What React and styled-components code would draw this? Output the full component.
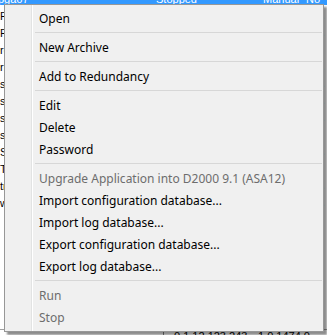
import React from "react";
import styled, { createGlobalStyle } from "styled-components";

const Global = createGlobalStyle`
  html, body { margin: 0; padding: 0; background: #ffffff; }
  body { width: 327px; height: 335px; overflow: hidden; }
`;

const Page = styled.div`
  position: relative;
  width: 327px;
  height: 335px;
  overflow: hidden;
  background: #ffffff;
  font-family: "Liberation Sans", Arial, sans-serif;
`;

const List = styled.div`
  display: flex;
  flex-direction: column;
  margin-top: -12px;
`;

const Row = styled.div`
  display: grid;
  grid-template-columns: 156px 107px 43px 1fr;
  height: 17px;
  line-height: 17px;
  font-size: 11px;
  white-space: nowrap;
  overflow: hidden;
  background: ${(p) => (p.$selected ? "#3399ff" : "#ffffff")};
  color: ${(p) => (p.$selected ? "#ffffff" : "#000000")};
  padding-top: 3px;
  box-sizing: border-box;
`;

const Cell = styled.span`
  overflow: hidden;
  margin-left: ${(p) => p.$shift || 0}px;
`;

const Footer = styled.div`
  position: absolute;
  left: 0;
  right: 0;
  top: 329px;
  height: 6px;
  border-top: 1px solid #a0a0a0;
  background: #ffffff;
  display: flex;
  font-size: 11px;
  line-height: 12px;
  color: #000;
  white-space: nowrap;
`;

const FootCell = styled.span`
  width: ${(p) => p.$w}px;
  padding-left: ${(p) => p.$pad || 0}px;
  border-left: ${(p) => (p.$line ? "1px solid #808080" : "none")};
  box-sizing: border-box;
  overflow: hidden;
`;

const Menu = styled.div`
  position: absolute;
  left: 4px;
  top: 4px;
  width: 320px;
  box-sizing: border-box;
  border: 1px solid #979797;
  padding: 2px 1px 3px 2px;
  background:
    linear-gradient(
      to right,
      transparent 26px,
      #e2e3e3 26px,
      #e2e3e3 27px,
      #ffffff 27px,
      #ffffff 28px,
      transparent 28px
    ),
    #f0f0f0;
  box-shadow: 3px 3px 2px rgba(0, 0, 0, 0.45);
  font-family: "Noto Sans", "Open Sans", sans-serif;
  font-size: 12px;
  display: flex;
  flex-direction: column;
`;

const Item = styled.div`
  height: 22px;
  line-height: 22px;
  padding-top: 1px;
  box-sizing: border-box;
  padding-left: 32px;
  color: ${(p) => (p.$disabled ? "#6d6d6d" : "#000000")};
  white-space: nowrap;
`;

const Separator = styled.div`
  height: 7px;
  display: flex;
  align-items: center;
  padding-left: 28px;
  &::after {
    content: "";
    flex: 1;
    height: 1px;
    background: #d7d7d7;
  }
`;

const rows = [
  { name: "pga67", status: "Stopped", mode: "Manual", flag: "No", sel: true },
  { name: "Pr_db01", status: "Running", mode: "Auto", flag: "Yes" },
  { name: "Redun_a", status: "Running", mode: "Auto", flag: "Yes" },
  { name: "rc_arch", status: "Stopped", mode: "Manual", flag: "No" },
  { name: "rr_cfg", status: "Running", mode: "Auto", flag: "Yes" },
  { name: "srv_01", status: "Running", mode: "Auto", flag: "Yes" },
  { name: "srv_02", status: "Running", mode: "Auto", flag: "Yes" },
  { name: "srv_03", status: "Running", mode: "Auto", flag: "Yes" },
  { name: "srv_04", status: "Stopped", mode: "Manual", flag: "No" },
  { name: "SCADA", status: "Running", mode: "Auto", flag: "Yes" },
  { name: "Test", status: "Stopped", mode: "Manual", flag: "No" },
  { name: "trend", status: "Running", mode: "Auto", flag: "Yes" },
  { name: "web", status: "Running", mode: "Auto", flag: "Yes" },
];

const menu = [
  { label: "Open" },
  { sep: true },
  { label: "New Archive" },
  { sep: true },
  { label: "Add to Redundancy" },
  { sep: true },
  { label: "Edit" },
  { label: "Delete" },
  { label: "Password" },
  { sep: true },
  { label: "Upgrade Application into D2000 9.1 (ASA12)", disabled: true },
  { label: "Import configuration database..." },
  { label: "Import log database..." },
  { label: "Export configuration database..." },
  { label: "Export log database..." },
  { sep: true },
  { label: "Run", disabled: true },
  { label: "Stop", disabled: true },
];

export default function App() {
  return (
    <Page>
      <Global />
      <List>
        {rows.map((r, i) => (
          <Row key={i} $selected={r.sel}>
            <Cell $shift={r.sel ? -2 : 0}>{r.name}</Cell>
            <Cell>{r.status}</Cell>
            <Cell>{r.mode}</Cell>
            <Cell>{r.flag}</Cell>
          </Row>
        ))}
      </List>
      <Footer>
        <FootCell $w={163} />
        <FootCell $w={85} $line $pad={10}>0.1.12.123.243</FootCell>
        <FootCell $w={79} $pad={10}>1.0.1474.0</FootCell>
      </Footer>
      <Menu>
        {menu.map((m, i) =>
          m.sep ? (
            <Separator key={i} />
          ) : (
            <Item key={i} $disabled={m.disabled}>
              {m.label}
            </Item>
          )
        )}
      </Menu>
    </Page>
  );
}
